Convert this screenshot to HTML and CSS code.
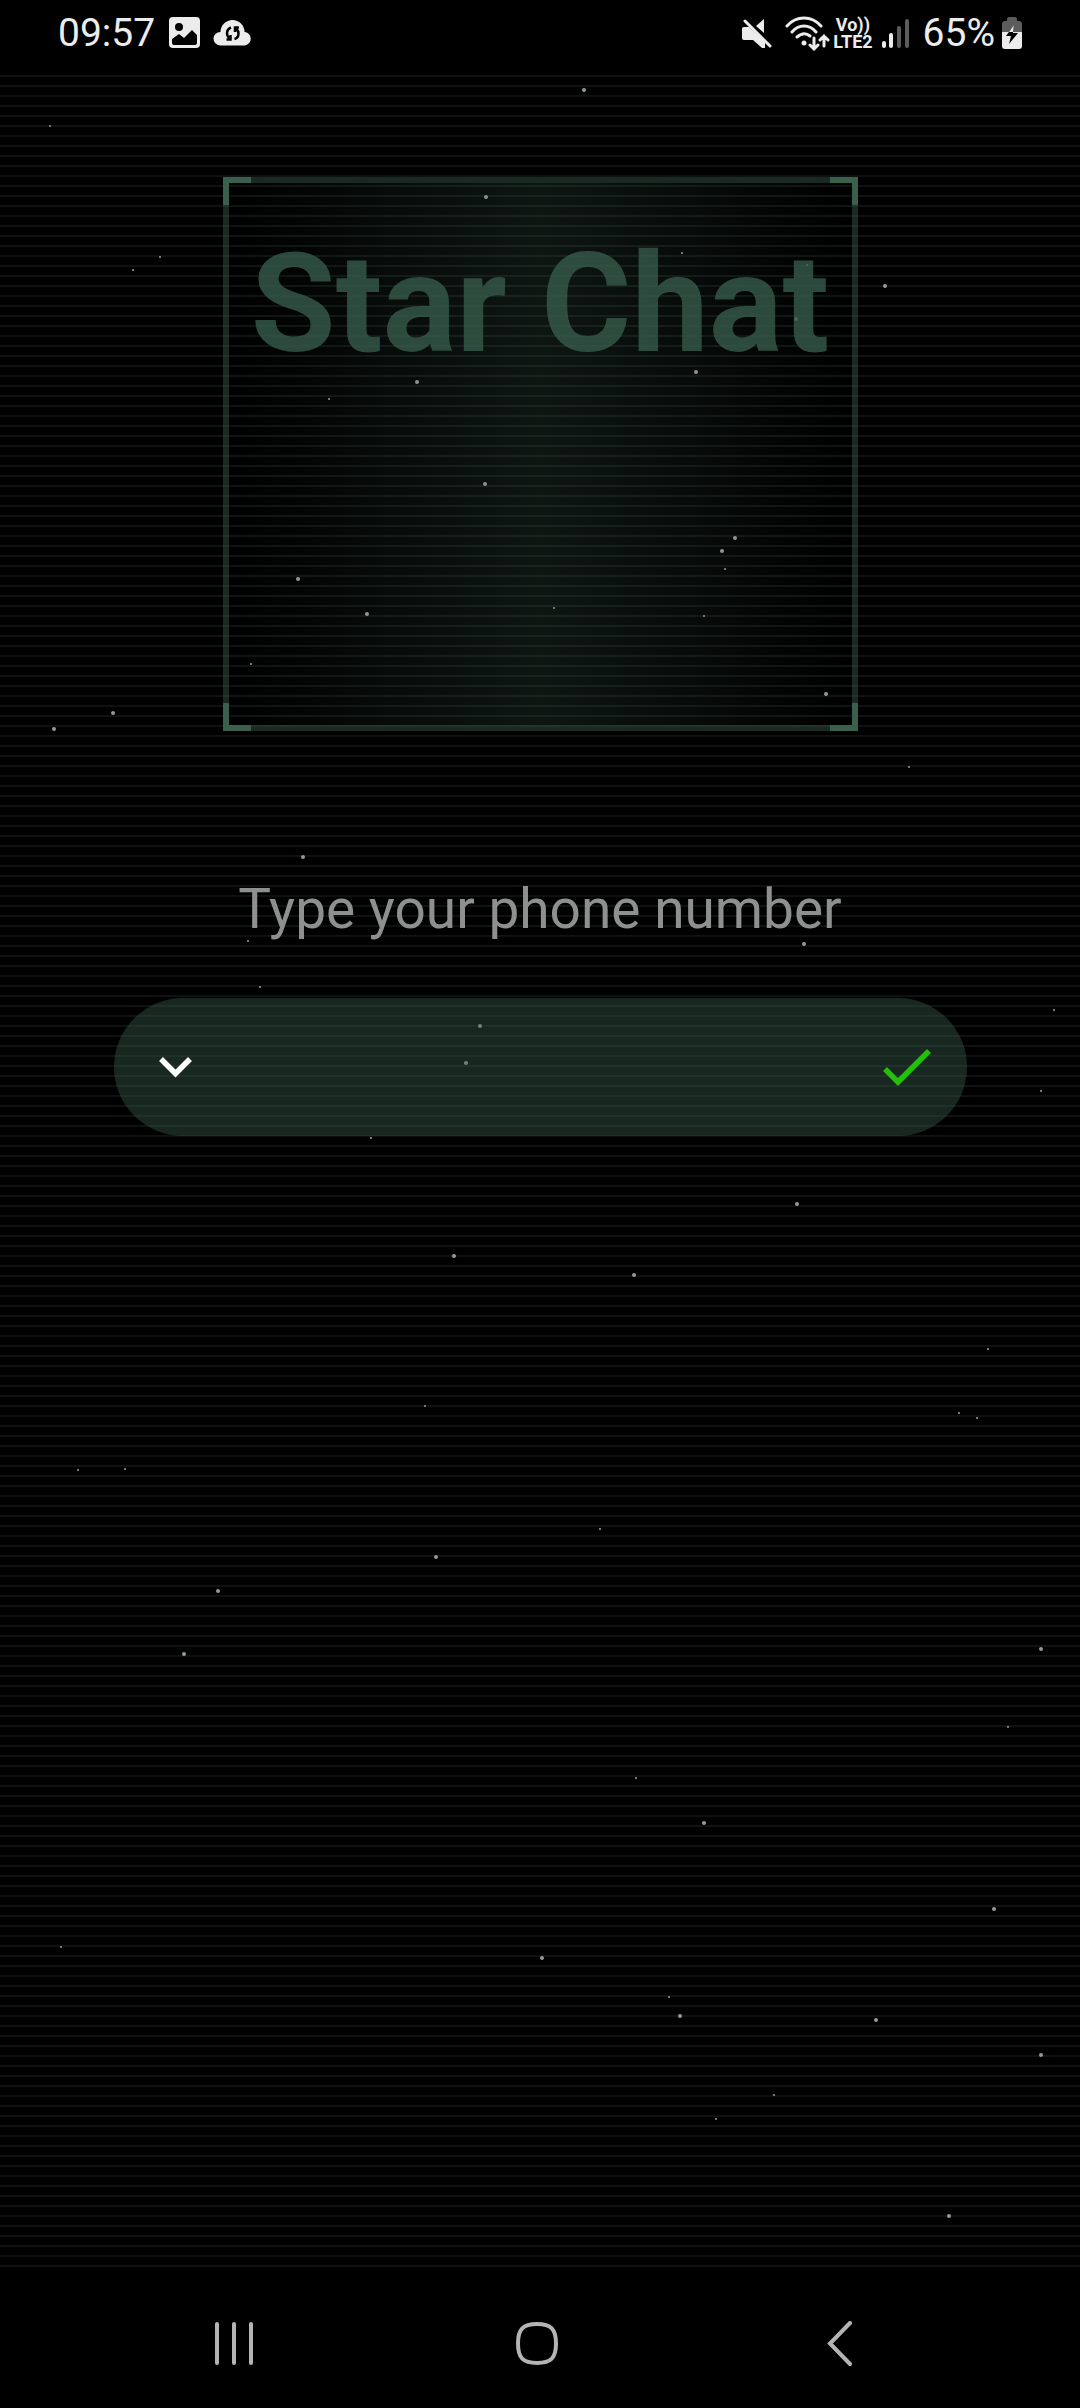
FILE: index.html
```html
<!DOCTYPE html>
<html lang="en">
<head>
  <meta charset="utf-8">
  <meta name="viewport" content="width=device-width, initial-scale=1">
  <title>Star Chat</title>
  <link rel="stylesheet" href="styles.css">
</head>
<body>
  <header class="status">
    <div class="status-left">
      <span class="time">09:57</span>
      <svg class="icon-image" width="32" height="32" viewBox="0 0 32 32" aria-hidden="true">
        <rect width="31" height="31" rx="4" fill="#ececec"/>
        <circle cx="10" cy="10" r="4" fill="#000"/>
        <path d="M3 22 L10 17 L15 21 L23 13 L28 18 V26 Q28 28 26 28 H5 Q3 28 3 26 Z" fill="#000"/>
      </svg>
      <svg width="40" height="32" viewBox="0 0 40 32" aria-hidden="true">
        <path d="M7 28.500 A6.500 6.500 0 0 1 7.500 15 A12 12 0 0 1 31.500 15 A6.800 6.800 0 0 1 32 28.500 Z" fill="#ececec"/>
        <path d="M18 10.500 Q14 12 14 16.500 Q14 19 16 21 M13.500 22.500 H17.500 V18 M21.500 22 Q25.500 21 25.500 16.500 Q25.500 14 23.500 12 M26 10.500 H22 V15" fill="none" stroke="#000" stroke-width="2.500"/>
      </svg>
    </div>
    <div class="status-right">
      <svg width="30" height="32" viewBox="0 0 30 32" aria-hidden="true">
        <path d="M2 10 H7 L23 25 V31 L20 31 L11 23 H2 Q0 23 0 21 V12 Q0 10 2 10 Z M22 2 V16 L14 9 Z" fill="#ececec"/>
        <path d="M3 4 L28 29" stroke="#ececec" stroke-width="3" stroke-linecap="round"/>
      </svg>
      <svg class="icon-wifi" width="46" height="36" viewBox="0 0 46 36" aria-hidden="true">
        <g fill="none" stroke="#ececec" stroke-width="3" stroke-linecap="round">
          <path d="M2 11 Q9 3 19 3 Q29 3 36 11 M7 17 Q12 11 19 11 Q26 11 31 17 M12 22 Q19 16 25 21"/>
          <path d="M29 23 V34 M25 30 L29 34 L33 30 M39 31 V21 M35 25 L39 21 L43 25"/>
        </g>
        <circle cx="19" cy="28" r="2.500" fill="#ececec"/>
      </svg>
      <span class="volte"><span>Vo))</span><span>LTE2</span></span>
      <svg class="icon-signal" width="28" height="32" viewBox="0 0 28 32" aria-hidden="true">
        <g fill="none" stroke-width="4" stroke-linecap="round">
          <path d="M3 26 V29 M10 18 V29" stroke="#ececec"/>
          <path d="M18 11 V29 M26 4 V29" stroke="#5c5c5c"/>
        </g>
      </svg>
      <span class="percent">65%</span>
      <svg width="20" height="34" viewBox="0 0 20 34" aria-hidden="true">
        <path d="M5 5 V3 Q5 1 7 1 H13 Q15 1 15 3 V5 H17 Q20 5 20 8 V16 H0 V8 Q0 5 3 5 Z" fill="#5c5c5c"/>
        <path d="M0 16 H20 V30 Q20 33 17 33 H3 Q0 33 0 30 Z" fill="#ececec"/>
        <path d="M12 9 L4 20 H9 L7 28 L16 17 H11 Z" fill="#000"/>
        <path d="M12 9 L7 16 H11 Z" fill="#ececec"/>
      </svg>
    </div>
  </header>

  <main class="screen">
    <svg class="stars" aria-hidden="true">
      <path class="star-large" d="M584 15h0M486 122h0M796 244h0M885 211h0M696 297h0M417 307h0M485 409h0M735 463h0M722 476h0M298 504h0M367 539h0M826 619h0M113 638h0M54 654h0M303 782h0M804 869h0M480 951h0M466 988h0M797 1129h0M454 1181h0M634 1200h0M436 1482h0M218 1516h0M184 1579h0M1041 1574h0M704 1748h0M994 1834h0M542 1883h0M680 1941h0M876 1945h0M1041 1980h0M949 2141h0"/>
      <path class="star-small" d="M50 51h0M160 182h0M133 195h0M682 178h0M807 190h0M329 324h0M725 494h0M554 533h0M704 541h0M251 589h0M909 692h0M248 866h0M260 912h0M1054 935h0M1041 1016h0M371 1063h0M988 1274h0M425 1331h0M959 1338h0M977 1343h0M78 1395h0M125 1394h0M600 1454h0M1008 1652h0M636 1703h0M61 1872h0M669 1922h0M774 2020h0M716 2044h0"/>
    </svg>

    <section class="frame">
      <h1 class="title">Star Chat</h1>
      <i class="corner corner-tl"></i>
      <i class="corner corner-tr"></i>
      <i class="corner corner-bl"></i>
      <i class="corner corner-br"></i>
    </section>

    <form class="phone-form">
      <label class="prompt" for="phone">Type your phone number</label>
      <div class="field">
        <button class="icon-button" type="button" aria-label="Country code">
          <svg width="33" height="21" viewBox="0 0 33 21" aria-hidden="true">
            <path d="M2 2 L16.500 16.500 L31 2" fill="none" stroke="#fff" stroke-width="5.500"/>
          </svg>
        </button>
        <input class="phone" id="phone" type="tel">
        <button class="icon-button" type="submit" aria-label="Confirm">
          <svg width="48" height="37" viewBox="0 0 48 37" aria-hidden="true">
            <path d="M2 20 L15 33 L46 2" fill="none" stroke="#22c00a" stroke-width="5.500"/>
          </svg>
        </button>
      </div>
    </form>
  </main>

  <nav class="system-nav">
    <button class="nav-button" type="button" aria-label="Recent apps">
      <svg width="40" height="46" viewBox="0 0 40 46" aria-hidden="true">
        <path d="M3 3 V42 M20 3 V42 M37 3 V42" stroke="#b4b4b4" stroke-width="4" stroke-linecap="round"/>
      </svg>
    </button>
    <button class="nav-button" type="button" aria-label="Home">
      <svg width="44" height="46" viewBox="0 0 44 46" aria-hidden="true">
        <path d="M22 3 C36 3 41 8 41 22.500 C41 37 36 42 22 42 C8 42 3 37 3 22.500 C3 8 8 3 22 3 Z" fill="none" stroke="#b4b4b4" stroke-width="4"/>
      </svg>
    </button>
    <button class="nav-button" type="button" aria-label="Back">
      <svg width="26" height="46" viewBox="0 0 26 46" aria-hidden="true">
        <path d="M23 2 L3 22.500 L23 43" fill="none" stroke="#b4b4b4" stroke-width="4" stroke-linecap="round"/>
      </svg>
    </button>
  </nav>
</body>
</html>
```
FILE: styles.css
```css
* {
  box-sizing: border-box;
}

body {
  display: flex;
  flex-direction: column;
  min-height: 100vh;
  margin: 0;
  background: #000;
  color: #ececec;
  font-family: Roboto, "Liberation Sans", sans-serif;
}

svg {
  display: block;
  flex: none;
}

button {
  margin: 0;
  padding: 0;
  border: 0;
  background: none;
}

/* Status bar */
.status {
  display: flex;
  justify-content: space-between;
  height: 75px;
  padding: 0 58px 9px;
}

.status-left,
.status-right {
  display: flex;
  align-items: center;
}

.status-left {
  gap: 12px;
}

.time,
.percent {
  font-size: 39px;
  line-height: 48px;
}

.icon-image {
  margin-left: 2px;
}

.icon-wifi {
  margin-left: 13px;
}

.volte {
  display: flex;
  flex-direction: column;
  align-items: center;
  margin-left: 2px;
  font-size: 18px;
  font-weight: 700;
  line-height: 17px;
}

.icon-signal {
  margin: 0 14px 0 8px;
}

.percent {
  margin-right: 7px;
}

/* Main screen with scan lines */
.screen {
  position: relative;
  display: flex;
  flex: 1;
  flex-direction: column;
  align-items: center;
  padding: 102px 24px 48px;
  background: repeating-linear-gradient(to bottom, #0d1312 0 2px, #000 2px 10px);
}

.stars {
  position: absolute;
  inset: 0;
  width: 100%;
  height: 100%;
  fill: none;
}

.star-large {
  stroke: #999;
  stroke-width: 4px;
  stroke-linecap: round;
}

.star-small {
  stroke: #777;
  stroke-width: 2px;
  stroke-linecap: square;
}

.frame {
  position: relative;
  width: 100%;
  max-width: 635px;
  min-height: 554px;
  padding-top: 40px;
  border: 6px solid rgba(68, 108, 88, 0.38);
  background: linear-gradient(to right, transparent, rgba(70, 108, 90, 0.2), transparent) padding-box;
}

.title {
  margin: 0;
  color: rgba(54, 91, 75, 0.8);
  font-size: 138px;
  font-weight: 700;
  line-height: 162px;
  text-align: center;
  white-space: nowrap;
}

.corner {
  position: absolute;
  width: 28px;
  height: 28px;
  border: 0 solid #3a5f4d;
}

.corner-tl {
  top: -6px;
  left: -6px;
  border-width: 6px 0 0 6px;
}

.corner-tr {
  top: -6px;
  right: -6px;
  border-width: 6px 6px 0 0;
}

.corner-bl {
  bottom: -6px;
  left: -6px;
  border-width: 0 0 6px 6px;
}

.corner-br {
  right: -6px;
  bottom: -6px;
  border-width: 0 6px 6px 0;
}

/* Phone entry */
.phone-form {
  position: relative;
  display: flex;
  flex-direction: column;
  gap: 57px;
  width: 100%;
  max-width: 853px;
  margin-top: 146px;
}

.prompt {
  color: #8f8f8f;
  font-size: 55px;
  line-height: 64px;
  text-align: center;
}

.field {
  display: flex;
  align-items: center;
  gap: 24px;
  height: 138px;
  padding: 0 36px 0 45px;
  border-radius: 69px;
  background: rgba(60, 98, 80, 0.4);
}

.phone {
  flex: 1;
  min-width: 0;
  height: 100%;
  padding: 0;
  border: 0;
  outline: 0;
  background: none;
  color: #fff;
  font: inherit;
  font-size: 55px;
}

/* System navigation */
.system-nav {
  display: grid;
  grid-template-columns: repeat(3, 1fr);
  height: 141px;
  padding: 13px 88px 0 82px;
}

.nav-button {
  display: flex;
  align-items: center;
  justify-content: center;
}
```
